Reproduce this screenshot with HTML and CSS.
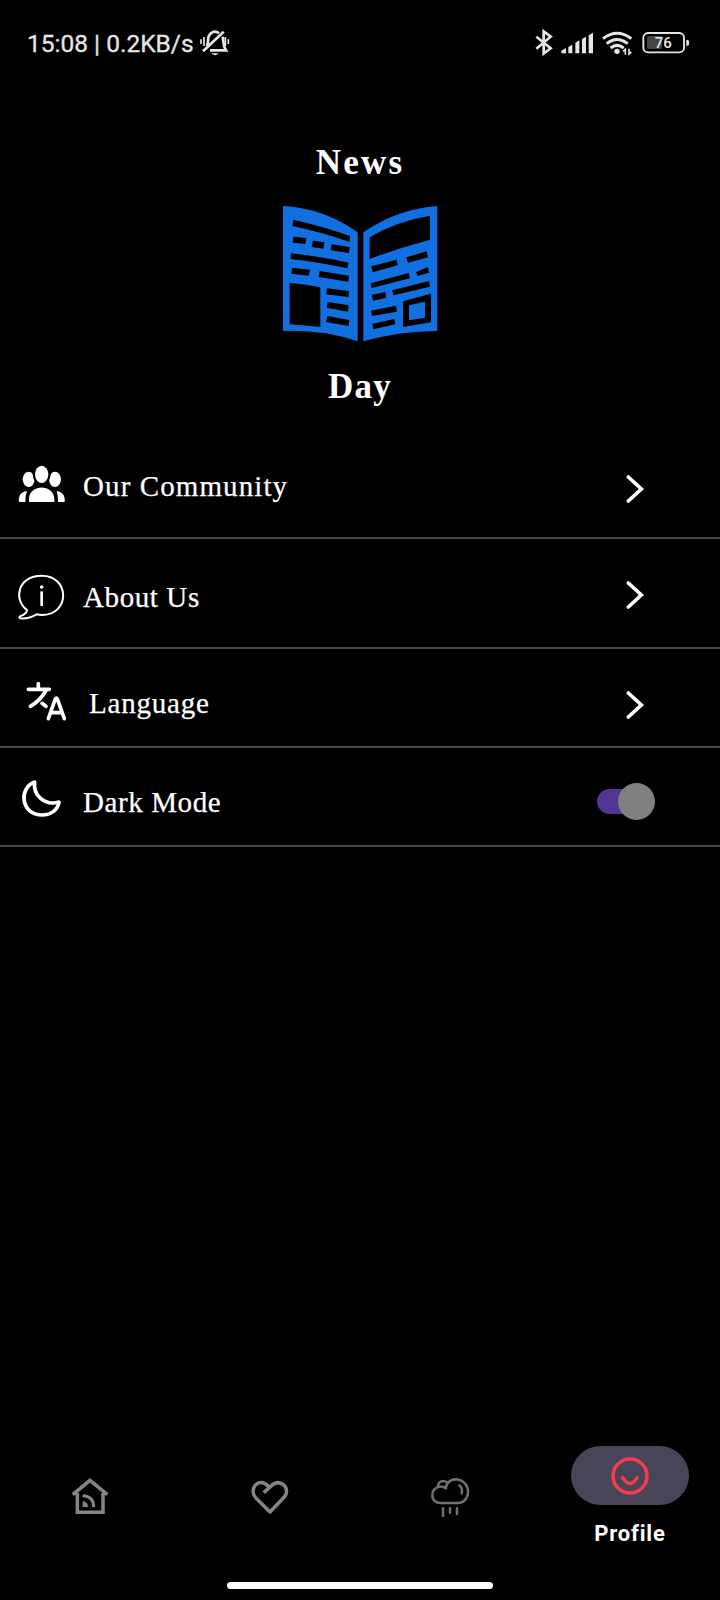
FILE: index.html
```html
<!DOCTYPE html>
<html lang="en">
<head>
<meta charset="utf-8">
<title>News Day</title>
<link rel="stylesheet" href="styles.css">
</head>
<body>
<div class="screen">
  <header class="status">
    <span class="status-text">15:08 | 0.2KB/s</span>
    <svg class="bell" viewBox="594 45 102 105" fill="none" stroke="#e6e6e6" stroke-width="6">
      <path d="M620 108C628 100 620 82 629 74Q642 58 657 70M668 80C671 95 668 106 678 121H630M609 124L671 65" stroke-width="8"/>
      <path d="M633 130H657Q645 141 633 130Z" fill="#e6e6e6" stroke="none"/>
      <path d="M603 88V102M612 81V108M676 81V108M685 88V102" stroke-width="5"/>
    </svg>
    <svg class="signals" viewBox="60 45 510 105" fill="none" stroke="#e6e6e6">
      <path d="M79 80L122 115L101 131V64L122 80L79 116" stroke-width="8"/>
      <g fill="#e6e6e6" stroke="none">
        <path d="M154 130V122L168 114V130ZM175 130V111L187 104V130ZM196 130V98L208 91V130ZM216 130V87L228 80V130ZM236 130V76L249 68V130Z"/>
        <circle cx="321" cy="124" r="8"/>
        <rect x="411" y="78" width="45" height="39" rx="5" fill="#444"/>
        <path d="M529 89Q537 89 537 94V103Q537 108 529 108Z"/>
      </g>
      <path d="M279 86Q321 54 364 86M290 101Q321 76 353 101M302 114Q321 98 341 114" stroke-width="9"/>
      <path d="M346 134V118L339 124M357 116V132L364 126" stroke-width="5"/>
      <rect x="400" y="69" width="122" height="58" rx="14" stroke-width="5.5"/>
      <text class="battery" x="460" y="115">76</text>
    </svg>
  </header>

  <section class="brand">
    <h1 class="brand-top">News</h1>
    <svg class="book" viewBox="0 156 540 552">
      <path fill="#116fe0" d="M39 228Q160 234 263 307V634Q160 599 39 603ZM502 228Q384 236 280 307V634Q390 603 502 603Z"/>
      <path fill="#000" d="M70 269Q160 289 240 318L239 336Q158 307 67 288ZM70 320L109 324L106 342L68 338ZM129 332L163 337L160 356L125 351ZM185 343L239 351L237 369L182 361ZM63 370Q155 380 236 398L232 415Q150 397 61 387ZM66 413L120 419L116 437L64 431ZM149 423L237 437L235 455L146 441ZM59 458Q106 463 151 472V591Q106 586 59 583ZM171 475L237 483L236 501L168 493ZM173 516L236 526L234 545L170 533ZM172 558L238 570L236 588L168 576Z"/>
      <path fill="#000" d="M299 322Q374 275 480 257V329Q388 353 299 387ZM304 409L380 389L383 406L308 427ZM409 382L470 364L474 382L414 398ZM302 460L416 429L420 445L305 474ZM438 426L474 411L477 428L443 438ZM305 495L346 486L349 503L309 512ZM366 481L477 453L480 470L371 496ZM303 542L378 527L381 545L306 558ZM307 581L373 567L376 583L310 598ZM399 514L483 491V577L399 591Z"/>
      <path fill="#116fe0" d="M417 526L465 515V563L417 571Z"/>
    </svg>
    <h1 class="brand-bottom">Day</h1>
  </section>

  <main class="menu">
    <div class="row community">
      <svg class="icon" viewBox="0 -60 249 321" fill="#fff">
        <ellipse cx="86" cy="88" rx="18" ry="23"/><ellipse cx="165" cy="88" rx="18" ry="23"/>
        <ellipse cx="125" cy="73" rx="27" ry="32" fill="#000"/><ellipse cx="125" cy="73" rx="20" ry="26"/>
        <path d="M87 156V145C91 102 159 102 163 145V156ZM57 156C55 137 62 126 81 123Q75 138 76 156ZM194 156C196 137 188 126 170 123Q175 138 174 156Z"/>
      </svg>
      <span class="label">Our Community</span>
      <svg class="arrow" viewBox="150 -60 96 321"><path d="M175 81L214 117L175 153"/></svg>
    </div>
    <div class="row about">
      <svg class="icon" viewBox="0 267 249 324" fill="none" stroke="#fff" stroke-width="6">
        <path d="M81 480C39 449 53 377 125 377C210 377 212 495 125 495Q118 495 110 493Q86 507 61 505Q56 504 60 499Q81 491 81 480Z"/>
        <path d="M125 424V468" stroke-width="8"/><circle cx="125" cy="411" r="5.5" fill="#fff" stroke="none"/>
      </svg>
      <span class="label">About Us</span>
      <svg class="arrow" viewBox="150 267 96 324"><path d="M175 399L214 435L175 471"/></svg>
    </div>
    <div class="row language">
      <svg class="icon" viewBox="0 27 267 291" fill="none" stroke="#fff" stroke-width="11" stroke-linecap="round">
        <path d="M85 148H148M115 131V147M139 150Q121 182 91 199M126 190L138 199" stroke-linejoin="round"/>
        <path d="M145 236L166 177Q169 172 172 177L193 236M152 218H186"/>
      </svg>
      <span class="label">Language</span>
      <svg class="arrow" viewBox="150 597 96 291"><path d="M175 729L214 765L175 801"/></svg>
    </div>
    <div class="row dark">
      <svg class="icon" viewBox="0 324 249 291" fill="none" stroke="#fff" stroke-width="11" stroke-linejoin="round">
        <path d="M104 426C55 443 62 525 126 525C153 525 174 509 177 486C133 499 98 464 104 426Z"/>
      </svg>
      <span class="label">Dark Mode</span>
      <span class="toggle"><span class="knob"></span></span>
    </div>
  </main>

  <nav class="tabs">
    <div class="tab">
      <svg class="tab-icon" viewBox="60 50 120 120" fill="none" stroke="#858585" stroke-width="10.5">
        <path d="M82 98V156H159V98M68 103L120 60L172 103"/>
        <path d="M98 106Q131 107 131 140" stroke-width="9"/><path d="M98 122Q114 125 114 140H98Z" fill="#858585" stroke="none"/>
      </svg>
    </div>
    <div class="tab">
      <svg class="tab-icon" viewBox="600 50 120 120" fill="none" stroke="#858585" stroke-width="10.5" stroke-linejoin="round">
        <path d="M641 97L668 73C691 56 718 80 707 104Q704 109 700 113L660 155L617 112C594 87 626 49 653 76L660 82"/>
      </svg>
    </div>
    <div class="tab">
      <svg class="tab-icon" viewBox="60 140 120 120" fill="none" stroke="#707070" stroke-width="7.5" stroke-linecap="round">
        <path d="M108 174C88 161 67 174 67 194C67 210 79 218 91 218H142C163 218 174 202 174 184C174 142 116 134 108 170M84 170C83 150 105 148 112 158M148 165Q159 174 155 189"/>
        <path d="M99 234V257M120 234V247M141 234V251"/>
      </svg>
    </div>
    <div class="tab active">
      <span class="pill">
        <svg class="smile" viewBox="600 76 120 120" fill="none" stroke="#f23d4b" stroke-width="10.5" stroke-linecap="round">
          <circle cx="660" cy="136" r="51"/><path d="M638 141Q660 176 682 141"/>
        </svg>
      </span>
      <span class="tab-label">Profile</span>
    </div>
  </nav>
  <div class="gesture"></div>
</div>
</body>
</html>
```
FILE: styles.css
```css
* { box-sizing: border-box; }
body { margin: 0; background: #000; color: #fff; }
svg { display: block; flex: none; }
.screen {
  width: 720px; height: 1600px; overflow: hidden;
  display: flex; flex-direction: column; align-items: center;
  background: #000; font-family: "Liberation Serif", serif;
}
.status { display: flex; width: 720px; height: 143px; padding: 25px 0 0 27px; font-family: Roboto, sans-serif; }
.status-text { width: 171px; font-size: 24.5px; line-height: 38px; color: #e6e6e6; white-space: nowrap; -webkit-text-stroke: 0.3px #e6e6e6; }
.bell { width: 34px; height: 35px; }
.signals { width: 170px; height: 35px; margin-left: 298px; }
.battery { font-family: Roboto, sans-serif; font-size: 45px; font-weight: 500; fill: #e6e6e6; stroke: none; text-anchor: middle; }

.brand { display: flex; flex-direction: column; align-items: center; height: 287px; }
.brand h1 { margin: 0; font-size: 35px; line-height: 40px; font-weight: 700; }
.brand-top { letter-spacing: 2.2px; }
.brand-bottom { letter-spacing: 1.2px; }
.book { width: 180px; height: 184px; margin-top: -1px; }
.brand-bottom { padding-top: 1px; }

.menu { width: 720px; }
.row { display: flex; align-items: center; border-bottom: 2px solid #4a494d; }
.community { height: 109px; }
.about { height: 110px; }
.language { height: 99px; }
.dark { height: 99px; }
.icon { width: 83px; height: 100%; }
.language .icon { width: 89px; }
.label { flex: 1; font-size: 29px; line-height: 40px; white-space: nowrap; -webkit-text-stroke: 0.25px #fff; }
.community .label { padding-top: 5px; letter-spacing: 1.1px; }
.about .label { padding-top: 8px; letter-spacing: 0.6px; }
.language .label { padding-top: 10px; letter-spacing: 0.8px; }
.dark .label { padding-top: 10px; letter-spacing: 0.6px; }
.arrow { width: 32px; height: 100%; margin-right: 68px; fill: none; stroke: #fff; stroke-width: 11; stroke-linecap: round; }
.toggle { display: flex; align-items: center; justify-content: flex-end; width: 57px; height: 25px; margin: 9px 66px 0 0; border-radius: 13px; background: #523592; }
.knob { width: 37px; height: 37px; border-radius: 50%; background: #808080; margin-right: -1px; flex: none; }

.tabs { display: grid; grid-template-columns: repeat(4, 180px); margin-top: auto; height: 136px; }
.tab { display: flex; flex-direction: column; align-items: center; padding-top: 31px; }
.tab-icon { width: 40px; height: 40px; }
.tab.active { padding-top: 0; }
.pill { display: flex; align-items: center; justify-content: center; width: 118px; height: 59px; border-radius: 30px; background: #4a4458; }
.smile { width: 40px; height: 40px; }
.tab-label { margin-top: 15px; font: 700 22px/28px Roboto, sans-serif; letter-spacing: 0.8px; }
.gesture { width: 266px; height: 7px; margin-bottom: 11px; border-radius: 4px; background: #fff; }
```
